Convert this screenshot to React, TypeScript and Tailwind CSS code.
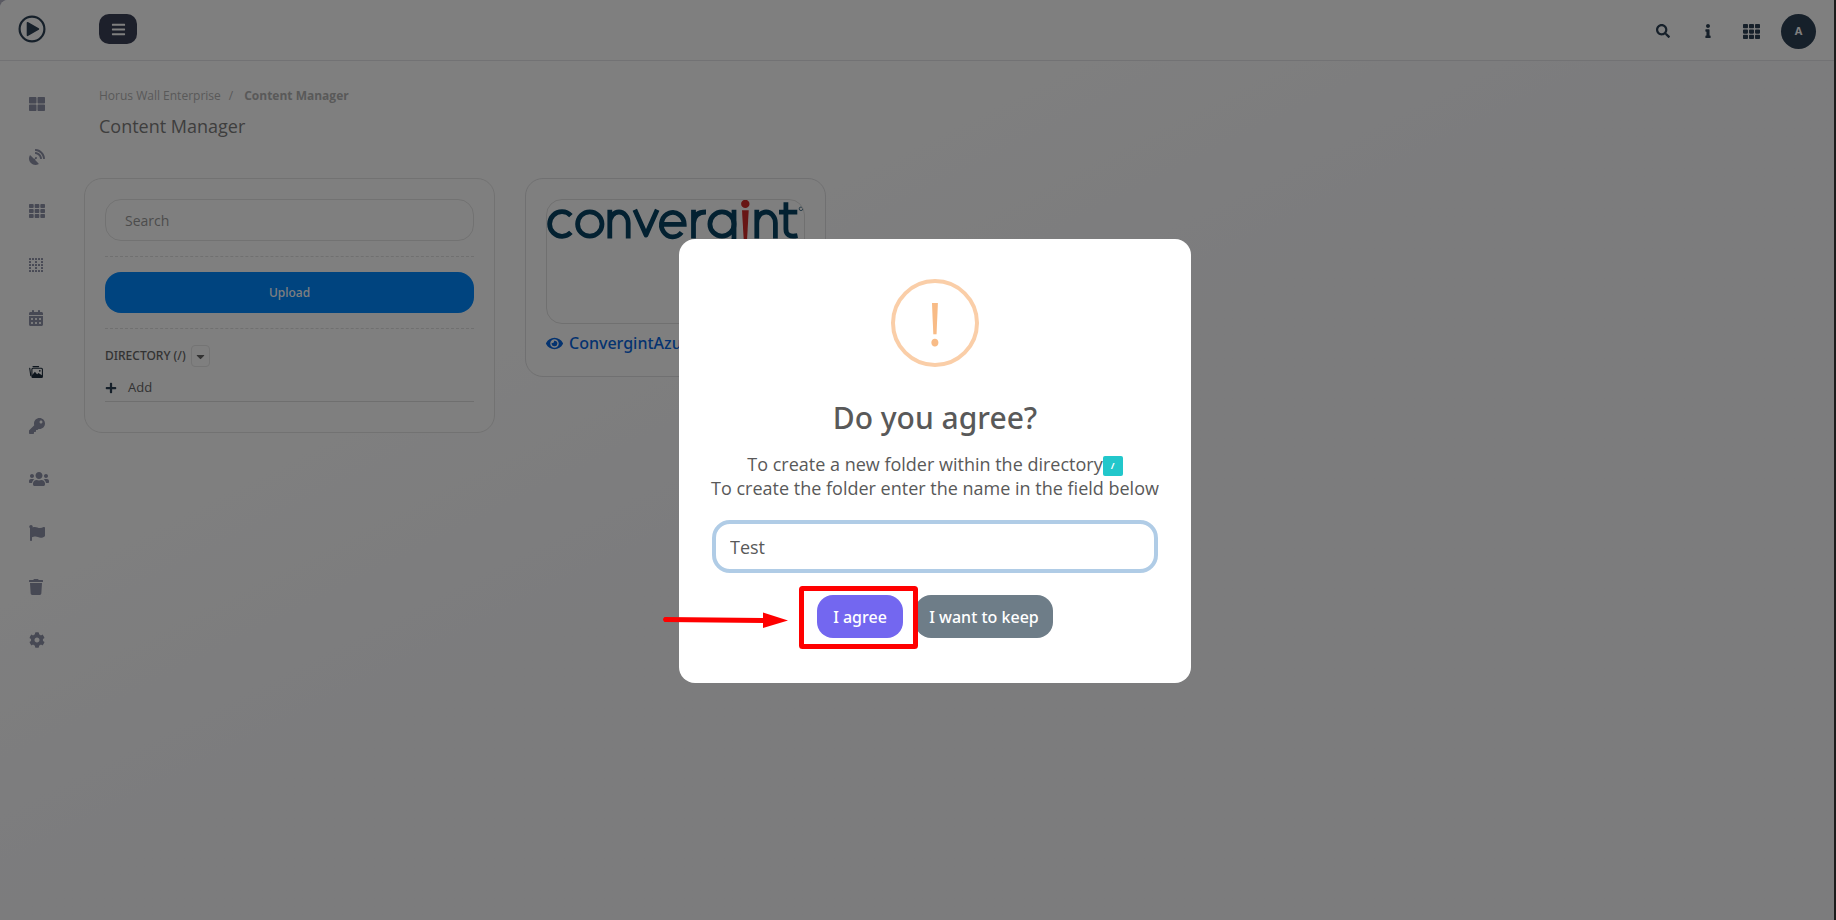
import type { ReactNode } from "react";
import {
  FaBars,
  FaBorderNone,
  FaCaretDown,
  FaCog,
  FaEye,
  FaFlag,
  FaInfo,
  FaKey,
  FaPlus,
  FaSatelliteDish,
  FaSearch,
  FaTh,
  FaThLarge,
  FaTrash,
  FaUsers,
} from "react-icons/fa";
import { FaCalendarDays } from "react-icons/fa6";

function PlayLogo() {
  return (
    <svg viewBox="0 0 28 28" className="size-7" aria-hidden="true">
      <circle cx="14" cy="14" r="12.4" fill="none" stroke="#2d4054" strokeWidth="2.2" />
      <path d="M9.5 7.7 20.4 14 9.5 20.3Z" fill="#2d4054" stroke="#2d4054" strokeWidth="1.6" strokeLinejoin="round" />
    </svg>
  );
}

function ImagesIcon() {
  return (
    <svg viewBox="0 0 14 12" className="h-3 w-3.5" aria-hidden="true">
      <g fill="none" stroke="currentColor" strokeLinecap="round">
        <path d="M4 .6h5.6M.7 2.2l1.1 7.4" strokeWidth="1.1" />
        <rect x="2.9" y="2.2" width="10.5" height="9.2" rx="1" strokeWidth="1.1" />
      </g>
      <path d="M3 11.4V9.2l2.9-3.4 2.2 2.4 1.4-1.3 3.8 2.6v1.9Z" fill="currentColor" />
      <circle cx="10.8" cy="4.8" r=".9" fill="currentColor" />
    </svg>
  );
}

const navItems: { label: string; icon: ReactNode; active?: boolean }[] = [
  { label: "Dashboard", icon: <FaThLarge /> },
  { label: "Sources", icon: <FaSatelliteDish /> },
  { label: "Walls", icon: <FaTh /> },
  { label: "Layouts", icon: <FaBorderNone className="w-3.5" /> },
  { label: "Schedule", icon: <FaCalendarDays className="w-3.5" /> },
  { label: "Content Manager", icon: <ImagesIcon />, active: true },
  { label: "Keys", icon: <FaKey /> },
  { label: "Users", icon: <FaUsers size={20} /> },
  { label: "Reports", icon: <FaFlag /> },
  { label: "Trash", icon: <FaTrash className="w-3.5" /> },
  { label: "Settings", icon: <FaCog /> },
];

function TopBar() {
  return (
    <header className="flex h-[61px] shrink-0 items-center border-b border-[#e4e4e8] bg-white pb-0.5 pl-[18px] pr-[18px] text-[#2d4054]">
      <a href="#home" aria-label="Home">
        <PlayLogo />
      </a>
      <button
        type="button"
        aria-label="Toggle menu"
        className="ml-[53px] flex h-[30px] w-[38px] items-center justify-center rounded-[10px] bg-[#3b4056] text-white"
      >
        <FaBars size={15} />
      </button>
      <div className="ml-auto flex items-center pt-1">
        <button type="button" aria-label="Search">
          <FaSearch size={14} />
        </button>
        <button type="button" aria-label="Information" className="ml-[31px]">
          <FaInfo size={14} />
        </button>
        <button type="button" aria-label="Applications" className="ml-7">
          <FaTh size={17} />
        </button>
        <button
          type="button"
          aria-label="Account"
          className="ml-[21px] size-[35px] rounded-full bg-[#2d4054] text-[11px] font-bold text-white"
        >
          A
        </button>
      </div>
    </header>
  );
}

function SideNav() {
  return (
    <nav aria-label="Main" className="w-[84px] shrink-0 pl-[29px] pt-4">
      <div className="grid h-[590px] auto-rows-fr">
        {navItems.map((item) => (
          <a
            key={item.label}
            href="#nav"
            aria-label={item.label}
            className={
              item.active
                ? "flex items-center text-base text-[#1c2c3c]"
                : "flex items-center text-base text-[#8e92a8]"
            }
          >
            {item.icon}
          </a>
        ))}
      </div>
    </nav>
  );
}

function DirectoryPanel() {
  return (
    <section className="w-[411px] rounded-[18px] border border-[#e4e4e4] bg-white px-5 pb-[30px] pt-5">
      <input
        type="search"
        aria-label="Search"
        placeholder="Search"
        className="block h-[42px] w-full rounded-2xl border border-[#e4e4e4] px-[19px] text-sm text-[#696969] placeholder:text-[#999]"
      />
      <hr className="my-[15px] border-dashed border-[#e0e0e0]" />
      <button
        type="button"
        className="block h-[41px] w-full rounded-2xl bg-[#0088ff] font-['Noto_Sans',sans-serif] text-xs font-medium text-white"
      >
        Upload
      </button>
      <hr className="mb-4 mt-[15px] border-dashed border-[#e0e0e0]" />
      <div className="flex items-center gap-[5px] font-['Noto_Sans',sans-serif] text-xs font-medium text-[#666]">
        DIRECTORY (/)
        <button
          type="button"
          aria-label="Directory options"
          className="flex h-[22px] w-[19px] items-center justify-center rounded border border-[#e8e8e8]"
        >
          <FaCaretDown size={13} />
        </button>
      </div>
      <button
        type="button"
        className="mt-2.5 flex h-[25px] w-full items-center gap-[11px] border-b border-[#dedede] pb-[3px] text-[13px] text-[#666]"
      >
        <FaPlus size={12} className="text-[#2d4054]" />
        Add
      </button>
    </section>
  );
}

function ConvergintLogo() {
  return (
    <svg viewBox="0 0 257 52" className="block w-full" role="img" aria-label="Convergint">
      <g fill="none" stroke="#064263" strokeWidth="4.8">
        <path d="M23.9 15.6A12.3 12.3 0 1 0 23.9 32.4" />
        <circle cx="42.8" cy="24" r="12.2" />
        <path d="M62.8 38.4V9.8M62.8 23A9.2 11 0 0 1 81.2 23V38.4" />
        <path d="M87.8 9.8 99 35 110.2 9.8" strokeLinejoin="round" />
        <path d="M114.5 24.4H137.2A11.4 12.2 0 1 0 134.6 32.4" />
        <path d="M146.5 38.4V9.8M146.5 23Q147 12 159 12" />
        <circle cx="175" cy="24" r="12.1" />
        <path d="M187 9.8V38Q187 48 176 48H166" />
        <path d="M209.8 38.4V9.8M209.8 23A9.3 11 0 0 1 228.4 23V38.4" />
        <path d="M238.9 2.3V29Q238.9 38 250.5 35.6M232 12.2H250.3" />
      </g>
      <circle cx="198.3" cy="3.9" r="4.2" fill="#d12d2a" />
      <path d="M195 10.3H201.7L199.6 48H197.2Z" fill="#d12d2a" />
      <circle cx="254" cy="8.8" r="1.8" fill="none" stroke="#064263" strokeWidth=".7" />
    </svg>
  );
}

function ContentCard() {
  return (
    <article className="w-[301px] rounded-[18px] border border-[#e0e0e2] bg-white px-5 pb-[21px] pt-5">
      <div className="h-[125px] overflow-hidden rounded-2xl border border-[#e0e0e0]">
        <ConvergintLogo />
      </div>
      <a
        href="#file"
        className="mt-[7px] flex items-center gap-1.5 overflow-hidden whitespace-nowrap font-['Noto_Sans',sans-serif] text-base font-medium leading-6 text-[#0866e0]"
      >
        <FaEye size={17} className="shrink-0" />
        ConvergintAzure.png
      </a>
    </article>
  );
}

function CreateFolderDialog() {
  return (
    <div
      role="dialog"
      aria-modal="true"
      aria-labelledby="dialog-title"
      className="flex w-[512px] flex-col items-center rounded-2xl bg-white pb-[45px] pt-10 text-[#595959]"
    >
      <div
        aria-hidden="true"
        className="flex size-[88px] items-center justify-center rounded-full border-4 border-[#facea8] text-[60px] leading-none text-[#f8bb86]"
      >
        !
      </div>
      <h2 id="dialog-title" className="mt-[31px] font-['Noto_Sans',sans-serif] text-[30px] font-medium leading-10">
        Do you agree?
      </h2>
      <p className="mt-3.5 text-center text-lg leading-6">
        To create a new folder within the directory
        <span className="-my-0.5 inline-block h-5 w-5 rounded-xs bg-[#22c7cb] text-center align-middle text-[9px] font-bold leading-5 text-white">
          /
        </span>
        <br />
        To create the folder enter the name in the field below
      </p>
      <input
        type="text"
        aria-label="Folder name"
        defaultValue="Test"
        className="mt-5 h-[53px] w-[446px] rounded-[18px] border-4 border-[#b0cce6] px-3.5 text-lg"
      />
      <div className="relative mt-[22px] flex gap-3 font-['Noto_Sans',sans-serif] text-base font-medium text-white">
        <button type="button" className="h-[43px] w-[86px] rounded-2xl bg-[#7367f0]">
          I agree
        </button>
        <button type="button" className="h-[43px] w-[138px] rounded-2xl bg-[#6e7d88]">
          I want to keep
        </button>
        <Callout />
      </div>
    </div>
  );
}

// Tutorial marker: frames the confirm button and points at it
function Callout() {
  return (
    <svg
      viewBox="0 0 256 64"
      className="pointer-events-none absolute -left-[155px] -top-[9px] h-16 w-64"
      aria-hidden="true"
    >
      <rect x="139.5" y="2.5" width="114" height="58" rx="1" fill="none" stroke="#ff0000" strokeWidth="5" />
      <path d="M2.5 31Q-.5 33.5 2.5 36L101 37V42L126 34.5 101 26.5V32Z" fill="#ff0000" />
    </svg>
  );
}

export default function App() {
  return (
    <div className="min-h-screen border-r-2 border-[#383838] bg-[#b5b5c5] font-['Open_Sans','Noto_Sans',sans-serif]">
      <div className="flex min-h-screen flex-col overflow-hidden rounded-tl-lg bg-linear-to-br from-white from-30% to-[#f8f8fb] to-50%">
        <TopBar />
        <div className="flex flex-1">
          <SideNav />
          <main className="flex-1 pt-[25px]">
            <div className="pl-[15px]">
              <nav aria-label="Breadcrumb" className="flex gap-2 text-xs leading-5 text-[#b3b3b3]">
                <a href="#home">Horus Wall Enterprise</a>
                <span>/</span>
                <span className="ml-[3px] font-bold">Content Manager</span>
              </nav>
              <h1 className="mt-1.5 text-lg leading-7 text-[#7d7d7d]">Content Manager</h1>
            </div>
            <div className="mt-[38px] flex items-start gap-[30px]">
              <DirectoryPanel />
              <ContentCard />
            </div>
          </main>
        </div>
      </div>
      <div className="fixed inset-0 flex items-center justify-center bg-black/50 pl-[34px] pt-0.5">
        <CreateFolderDialog />
      </div>
    </div>
  );
}
